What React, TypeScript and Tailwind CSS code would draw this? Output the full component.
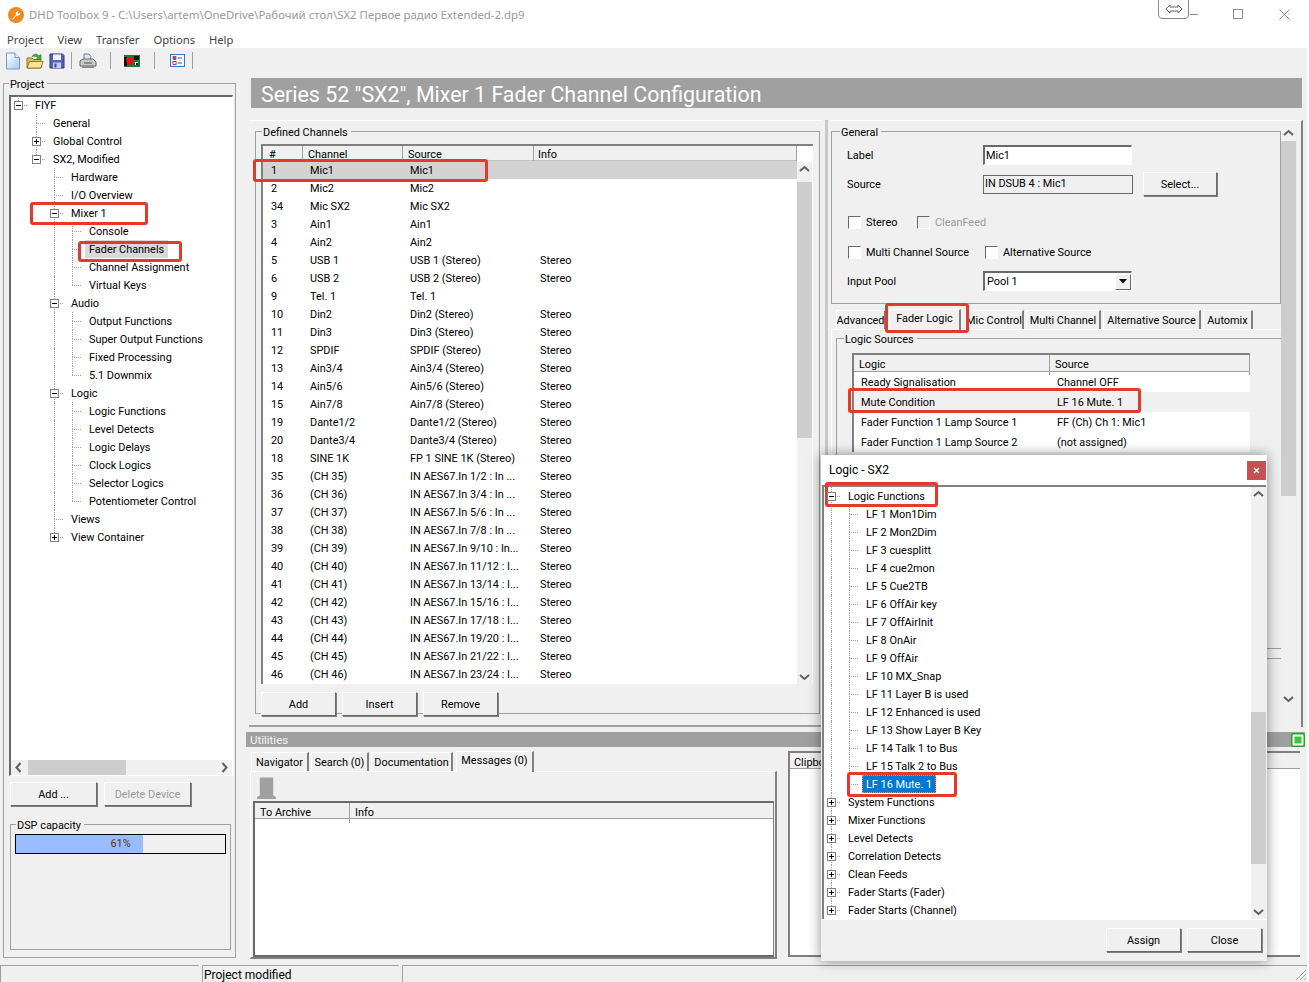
import React from "react";

type Node = [number, string, "leaf" | "plus" | "minus", boolean?];

const projectTree: Node[] = [
  [0, "FIYF", "minus"],
  [1, "General", "leaf"],
  [1, "Global Control", "plus"],
  [1, "SX2, Modified", "minus"],
  [2, "Hardware", "leaf"],
  [2, "I/O Overview", "leaf"],
  [2, "Mixer 1", "minus"],
  [3, "Console", "leaf"],
  [3, "Fader Channels", "leaf", true],
  [3, "Channel Assignment", "leaf"],
  [3, "Virtual Keys", "leaf"],
  [2, "Audio", "minus"],
  [3, "Output Functions", "leaf"],
  [3, "Super Output Functions", "leaf"],
  [3, "Fixed Processing", "leaf"],
  [3, "5.1 Downmix", "leaf"],
  [2, "Logic", "minus"],
  [3, "Logic Functions", "leaf"],
  [3, "Level Detects", "leaf"],
  [3, "Logic Delays", "leaf"],
  [3, "Clock Logics", "leaf"],
  [3, "Selector Logics", "leaf"],
  [3, "Potentiometer Control", "leaf"],
  [2, "Views", "leaf"],
  [2, "View Container", "plus"],
];

const logicTree: Node[] = [
  [0, "Logic Functions", "minus"],
  [1, "LF 1 Mon1Dim", "leaf"],
  [1, "LF 2 Mon2Dim", "leaf"],
  [1, "LF 3 cuesplitt", "leaf"],
  [1, "LF 4 cue2mon", "leaf"],
  [1, "LF 5 Cue2TB", "leaf"],
  [1, "LF 6 OffAir key", "leaf"],
  [1, "LF 7 OffAirInit", "leaf"],
  [1, "LF 8 OnAir", "leaf"],
  [1, "LF 9 OffAir", "leaf"],
  [1, "LF 10 MX_Snap", "leaf"],
  [1, "LF 11 Layer B is used", "leaf"],
  [1, "LF 12 Enhanced is used", "leaf"],
  [1, "LF 13 Show Layer B Key", "leaf"],
  [1, "LF 14 Talk 1 to Bus", "leaf"],
  [1, "LF 15 Talk 2 to Bus", "leaf"],
  [1, "LF 16 Mute. 1", "leaf", true],
  [0, "System Functions", "plus"],
  [0, "Mixer Functions", "plus"],
  [0, "Level Detects", "plus"],
  [0, "Correlation Detects", "plus"],
  [0, "Clean Feeds", "plus"],
  [0, "Fader Starts (Fader)", "plus"],
  [0, "Fader Starts (Channel)", "plus"],
];

const channels: [string, string, string, string][] = [
  ["1", "Mic1", "Mic1", ""],
  ["2", "Mic2", "Mic2", ""],
  ["34", "Mic SX2", "Mic SX2", ""],
  ["3", "Ain1", "Ain1", ""],
  ["4", "Ain2", "Ain2", ""],
  ["5", "USB 1", "USB 1 (Stereo)", "Stereo"],
  ["6", "USB 2", "USB 2 (Stereo)", "Stereo"],
  ["9", "Tel. 1", "Tel. 1", ""],
  ["10", "Din2", "Din2 (Stereo)", "Stereo"],
  ["11", "Din3", "Din3 (Stereo)", "Stereo"],
  ["12", "SPDIF", "SPDIF (Stereo)", "Stereo"],
  ["13", "Ain3/4", "Ain3/4 (Stereo)", "Stereo"],
  ["14", "Ain5/6", "Ain5/6 (Stereo)", "Stereo"],
  ["15", "Ain7/8", "Ain7/8 (Stereo)", "Stereo"],
  ["19", "Dante1/2", "Dante1/2 (Stereo)", "Stereo"],
  ["20", "Dante3/4", "Dante3/4 (Stereo)", "Stereo"],
  ["18", "SINE 1K", "FP 1 SINE 1K (Stereo)", "Stereo"],
  ["35", "(CH 35)", "IN AES67.In 1/2 : In ...", "Stereo"],
  ["36", "(CH 36)", "IN AES67.In 3/4 : In ...", "Stereo"],
  ["37", "(CH 37)", "IN AES67.In 5/6 : In ...", "Stereo"],
  ["38", "(CH 38)", "IN AES67.In 7/8 : In ...", "Stereo"],
  ["39", "(CH 39)", "IN AES67.In 9/10 : In...", "Stereo"],
  ["40", "(CH 40)", "IN AES67.In 11/12 : I...", "Stereo"],
  ["41", "(CH 41)", "IN AES67.In 13/14 : I...", "Stereo"],
  ["42", "(CH 42)", "IN AES67.In 15/16 : I...", "Stereo"],
  ["43", "(CH 43)", "IN AES67.In 17/18 : I...", "Stereo"],
  ["44", "(CH 44)", "IN AES67.In 19/20 : I...", "Stereo"],
  ["45", "(CH 45)", "IN AES67.In 21/22 : I...", "Stereo"],
  ["46", "(CH 46)", "IN AES67.In 23/24 : I...", "Stereo"],
];

const logicRows = [
  ["Ready Signalisation", "Channel OFF"],
  ["Mute Condition", "LF 16 Mute. 1"],
  ["Fader Function 1 Lamp Source 1", "FF (Ch) Ch 1: Mic1"],
  ["Fader Function 1 Lamp Source 2", "(not assigned)"],
];

// does another sibling follow at this level, before the tree climbs out of it
function continues(tree: Node[], index: number, level: number) {
  for (let i = index + 1; i < tree.length; i++) {
    if (tree[i][0] === level) return true;
    if (tree[i][0] < level) return false;
  }
  return false;
}

function ExpandBox({ open }: { open: boolean }) {
  return (
    <span className="relative z-10 flex h-[9px] w-[9px] items-center justify-center border border-[#808080] bg-white">
      <svg width="7" height="7" viewBox="0 0 7 7">
        <path d={open ? "M1 3.5H6" : "M1 3.5H6M3.5 1V6"} stroke="#000" strokeWidth="1" />
      </svg>
    </span>
  );
}

function Tree({ nodes, activeClass }: { nodes: Node[]; activeClass: string }) {
  return (
    <div className="flex flex-col">
      {nodes.map((n, i) => {
        const [level, label, kind, active] = n;
        const guides = Array.from({ length: level }, (_, g) => continues(nodes, i, g));
        return (
          <div key={label + i} className="flex h-[18px] items-center">
            {guides.map((on, g) => (
              <span key={g} className="flex h-full w-[18px] shrink-0">
                {on && <span className="ml-[9px] h-full border-l border-dotted border-[#a0a0a0]" />}
              </span>
            ))}
            <span className="relative flex h-full w-[18px] shrink-0 items-center justify-center">
              <span className="absolute top-0 left-[9px] h-1/2 border-l border-dotted border-[#a0a0a0]" />
              {continues(nodes, i, level) && (
                <span className="absolute top-1/2 bottom-0 left-[9px] border-l border-dotted border-[#a0a0a0]" />
              )}
              <span className="absolute top-1/2 left-[9px] w-[9px] border-t border-dotted border-[#a0a0a0]" />
              {kind !== "leaf" && <ExpandBox open={kind === "minus"} />}
            </span>
            <span
              className={`ml-[4px] h-[18px] px-[4px] pt-[1px] leading-[18px] whitespace-nowrap ${active ? activeClass : ""}`}
            >
              {label}
            </span>
          </div>
        );
      })}
    </div>
  );
}

function Chevron({ dir }: { dir: "up" | "down" | "left" | "right" }) {
  const d = {
    up: "M3 9L7.5 5L12 9",
    down: "M3 6L7.5 10L12 6",
    left: "M9.5 3L5.5 7.5L9.5 12",
    right: "M5.5 3L9.5 7.5L5.5 12",
  }[dir];
  return (
    <svg width="15" height="15" viewBox="0 0 15 15" className="shrink-0">
      <path d={d} fill="none" stroke="#606060" strokeWidth="2" />
    </svg>
  );
}

function VScroll({ className, before, thumb }: { className: string; before: string; thumb: string }) {
  return (
    <div className={`flex w-[15px] shrink-0 flex-col bg-[#f0f0f0] ${className}`}>
      <Chevron dir="up" />
      <div className={`shrink-0 ${before}`} />
      <div className={`shrink-0 bg-[#cdcdcd] ${thumb}`} />
      <div className="flex-1" />
      <Chevron dir="down" />
    </div>
  );
}

function Button({ children, className = "" }: { children: React.ReactNode; className?: string }) {
  return (
    <div
      className={`flex h-[24px] shrink-0 items-center justify-center border border-t-white border-r-[#696969] border-b-[#696969] border-l-white bg-[#f0f0f0] pt-[2px] shadow-[1px_1px_0_#808080] ${className}`}
    >
      {children}
    </div>
  );
}

function Group({
  title,
  className = "",
  inner = "",
  legend = "ml-[5px]",
  children,
}: {
  title: string;
  className?: string;
  inner?: string;
  legend?: string;
  children?: React.ReactNode;
}) {
  return (
    <fieldset className={`border border-[#a0a0a0] ${className}`}>
      <legend className={`h-[14px] pr-[3px] pl-[1px] leading-[17px] ${legend}`}>{title}</legend>
      <div className={`flex flex-col ${inner}`}>{children}</div>
    </fieldset>
  );
}

function Check({ label, disabled = false }: { label: string; disabled?: boolean }) {
  return (
    <div className={`flex items-center gap-[5px] ${disabled ? "text-[#9a9a9a]" : ""}`}>
      <span
        className={`ml-px h-[13px] w-[13px] border border-t-[#696969] border-r-white border-b-white border-l-[#696969] ${
          disabled ? "bg-[#f0f0f0]" : "bg-white"
        }`}
      />
      <span className="pt-[2px]">{label}</span>
    </div>
  );
}

function Tab({ label, className, active = false }: { label: string; className: string; active?: boolean }) {
  return (
    <div
      className={`flex shrink-0 items-center justify-center border-t border-r-2 border-l border-t-white border-r-[#808080] border-l-white bg-[#f0f0f0] whitespace-nowrap ${
        active ? "z-10 -mb-px h-[21px] pb-[1px]" : "h-[19px] pt-[2px]"
      } ${className}`}
    >
      {label}
    </div>
  );
}

function NewIcon() {
  return (
    <svg width="16" height="18" viewBox="0 0 16 18">
      <defs>
        <linearGradient id="paper" x1="0" y1="0" x2="1" y2="1">
          <stop offset="0" stopColor="#ffffff" />
          <stop offset="1" stopColor="#a9c8ee" />
        </linearGradient>
      </defs>
      <path d="M1.5 1H10L14.5 5.5V17H1.5Z" fill="url(#paper)" stroke="#7d97bd" />
      <path d="M10 1V5.5H14.5" fill="#eef4fc" stroke="#7d97bd" />
    </svg>
  );
}

function OpenIcon() {
  return (
    <svg width="18" height="18" viewBox="0 0 18 18">
      <path d="M1 6H6L7 7.5H15V16H1Z" fill="#e3bf5c" stroke="#96762a" />
      <path d="M1 16L3.5 9.5H17L15 16Z" fill="#fbe593" stroke="#96762a" />
      <path d="M6 4.5C8 1.5 11 1.5 13 4L15 2.5V7.5H10L11.7 5.7C10 4 8 4 6 4.5Z" fill="#3fae3a" stroke="#23771f" strokeWidth=".6" />
    </svg>
  );
}

function SaveIcon() {
  return (
    <svg width="16" height="16" viewBox="0 0 16 16">
      <path d="M1 1H13.5L15 2.5V15H1Z" fill="#5562b8" stroke="#2c3484" />
      <rect x="4" y="1.5" width="8" height="5.5" fill="#f4f4fb" />
      <rect x="4" y="9.5" width="8" height="5.5" fill="#c8cde8" />
      <rect x="5.5" y="10.5" width="2" height="4" fill="#3c4698" />
    </svg>
  );
}

function PrintIcon() {
  return (
    <svg width="18" height="16" viewBox="0 0 18 16">
      <path d="M5 1H10L12 3.5L11 8H5Z" fill="#dfe6ef" stroke="#6d7d92" />
      <path d="M1 8L4 6H14L17 9V13H1Z" fill="#c9c9c9" stroke="#6a6a6a" />
      <path d="M3 13H15V15H3Z" fill="#8c8c8c" />
      <path d="M5 10H13" stroke="#4f4f4f" />
    </svg>
  );
}

function BoardIcon() {
  return (
    <svg width="16" height="12" viewBox="0 0 16 12">
      <rect width="16" height="12" fill="#1b7a3a" />
      <rect x="0" y="2" width="3" height="9" fill="#101010" />
      <path d="M2 3L7 2L10 5L8 10L3 9Z" fill="#f20d0d" />
      <rect x="10" y="1" width="5" height="4" fill="#101010" />
      <rect x="11" y="7" width="3" height="3" fill="#e8e8e8" />
      <rect x="12" y="8" width="2" height="2" fill="#101010" />
    </svg>
  );
}

function CheckListIcon() {
  return (
    <svg width="15" height="13" viewBox="0 0 15 13">
      <rect x=".5" y=".5" width="14" height="12" fill="#f2f6fc" stroke="#2a78d0" />
      <rect x="3" y="2.5" width="3" height="3" fill="#d9433a" stroke="#7a2b26" strokeWidth=".5" />
      <rect x="3" y="7.5" width="3" height="3" fill="#fff" stroke="#7a2b26" strokeWidth=".8" />
      <path d="M7.5 4H12M7.5 9H12" stroke="#5b5b5b" strokeWidth="1.2" />
    </svg>
  );
}

const marks = [
  "left-[253px] top-[159px] w-[235px] h-[23px]",
  "left-[30px] top-[202px] w-[118px] h-[23px]",
  "left-[78px] top-[241px] w-[104px] h-[21px]",
  "left-[885px] top-[303px] w-[84px] h-[30px]",
  "left-[848px] top-[388px] w-[293px] h-[25px]",
  "left-[825px] top-[482px] w-[113px] h-[25px]",
  "left-[847px] top-[772px] w-[110px] h-[25px]",
];

export default function App() {
  return (
    <div className="relative flex h-[982px] w-[1309px] flex-col overflow-hidden bg-[#f0f0f0] [font-family:Roboto,sans-serif] text-[10.9px] text-black">
      {/* Title bar and menu */}
      <div className="flex h-[30px] shrink-0 items-center bg-white pl-[8px] [font-family:'Noto_Sans',sans-serif] text-[11.4px] text-[#999999]">
        <svg width="16" height="16" viewBox="0 0 16 16" className="mr-[5px]">
          <circle cx="8" cy="8" r="8" fill="#ee8a1e" />
          <path d="M4 12L8 8C7.2 6 8.6 3.8 11 4L9.6 5.8L10.6 6.9L12.4 5.4C12.6 7.8 10.4 9 8.6 8.6L5 12.4Z" fill="#fff" />
        </svg>
        DHD Toolbox 9 - C:\Users\artem\OneDrive\Рабочий стол\SX2 Первое радио Extended-2.dp9
      </div>
      <div className="flex h-[18px] shrink-0 items-center gap-[14px] bg-white pt-[2px] pl-[7px] [font-family:'Noto_Sans',sans-serif] text-[11.2px] text-[#444444]">
        <span>Project</span>
        <span>View</span>
        <span>Transfer</span>
        <span>Options</span>
        <span>Help</span>
      </div>

      {/* Toolbar */}
      <div className="flex h-[25px] shrink-0 items-center pl-[4px]">
        <div className="flex w-[18px] justify-center"><NewIcon /></div>
        <div className="ml-[4px] flex w-[18px] justify-center"><OpenIcon /></div>
        <div className="ml-[4px] flex w-[18px] justify-center"><SaveIcon /></div>
        <div className="ml-[5px] h-[17px] border-l border-[#a0a0a0]" />
        <div className="ml-[7px] flex w-[18px] justify-center"><PrintIcon /></div>
        <div className="ml-[13px] h-[17px] border-l border-[#a0a0a0]" />
        <div className="ml-[13px] flex w-[16px] justify-center"><BoardIcon /></div>
        <div className="ml-[14px] h-[17px] border-l border-[#a0a0a0]" />
        <div className="ml-[15px] flex w-[15px] justify-center"><CheckListIcon /></div>
        <div className="ml-[7px] h-[17px] border-l border-[#a0a0a0]" />
      </div>

      {/* Main area */}
      <div className="flex h-[892px] shrink-0">
        {/* Project column */}
        <div className="flex w-[246px] shrink-0 flex-col pt-[3px] pl-[3px]">
          <Group title="Project" className="h-[882px] w-[233px]" inner="pl-[5px]">
            <div className="mt-[5px] flex h-[681px] w-[224px] shrink-0 flex-col border-t-2 border-l-2 border-t-[#696969] border-r border-b border-l-[#696969] border-r-white border-b-white bg-white">
              <div className="-mt-px -ml-[2px] flex-1">
                <Tree nodes={projectTree} activeClass="bg-[#d9d9d9]" />
              </div>
              <div className="flex h-[15px] shrink-0 bg-[#f0f0f0]">
                <Chevron dir="left" />
                <div className="ml-[2px] h-full w-[98px] bg-[#cdcdcd]" />
                <div className="flex-1" />
                <Chevron dir="right" />
              </div>
            </div>
            <div className="mt-[6px] flex gap-[7px] pl-px">
              <Button className="w-[87px]">Add ...</Button>
              <Button className="w-[87px] text-[#9a9a9a]">Delete Device</Button>
            </div>
            <Group title="DSP capacity" className="mt-[11px] ml-px h-[133px] w-[220px]" inner="px-[4px]">
              <div className="relative mt-[3px] h-[20px] w-[211px] border border-black">
                <div className="h-full w-[61%] bg-[#99bbff]" />
                <span className="absolute inset-0 flex items-center justify-center pt-[1px] text-[#553311]">61%</span>
              </div>
            </Group>
          </Group>
        </div>

        {/* Working area */}
        <div className="flex w-[1060px] shrink-0 flex-col">
          <div className="mt-[5px] ml-[5px] flex h-[30px] w-[1051px] shrink-0 items-center bg-[#a0a0a0] pt-[4px] pl-[10px] text-[21.4px] text-white">
            Series 52 "SX2", Mixer 1 Fader Channel Configuration
          </div>

          <div className="mt-[12px] flex h-[607px] shrink-0">
            {/* Defined channels */}
            <div className="ml-[3px] flex w-[573px] shrink-0 flex-col border-t border-b-2 border-t-white border-b-[#a0a0a0] pt-[3px] pl-[6px]">
              <Group title="Defined Channels" className="h-[590px] w-[565px]" legend="ml-[6px]" inner="pl-[5px]">
                <div className="mt-[6px] flex h-[540px] w-[552px] shrink-0 border-t-2 border-l-2 border-t-[#808080] border-l-[#808080] bg-white">
                  <div className="flex w-[534px] shrink-0 flex-col">
                    <div className="grid h-[15px] shrink-0 grid-cols-[39px_100px_131px_264px] border-b border-[#c0c0c0] bg-[#f0f0f0] leading-[18px]">
                      <span className="pl-[6px]">#</span>
                      <span className="border-l border-[#a0a0a0] pl-[5px]">Channel</span>
                      <span className="border-l border-[#a0a0a0] pl-[5px]">Source</span>
                      <span className="border-r border-l border-[#a0a0a0] pl-[4px]">Info</span>
                    </div>
                    {channels.map((c, i) => (
                      <div
                        key={c[0]}
                        className={`grid h-[18px] shrink-0 grid-cols-[39px_100px_131px_264px] leading-[20px] whitespace-nowrap ${
                          i === 0 ? "bg-[#d3d3d3]" : ""
                        }`}
                      >
                        <span className="pl-[8px]">{c[0]}</span>
                        <span className="pl-[8px]">{c[1]}</span>
                        <span className="pl-[8px]">{c[2]}</span>
                        <span className="pl-[7px]">{c[3]}</span>
                      </div>
                    ))}
                  </div>
                  <VScroll className="mt-[16px]" before="h-[5px]" thumb="h-[256px]" />
                </div>
                <div className="mt-[8px] flex gap-[6px]">
                  <Button className="w-[75px]">Add</Button>
                  <Button className="w-[75px]">Insert</Button>
                  <Button className="w-[75px]">Remove</Button>
                </div>
              </Group>
            </div>

            {/* Splitter */}
            <div className="ml-[3px] h-full w-[3px] shrink-0 bg-[#c8c8c8]" />

            {/* Channel properties */}
            <div className="ml-[3px] flex h-full w-[472px] shrink-0 border-t border-r-2 border-t-white border-r-[#808080]">
              <div className="flex w-[450px] shrink-0 flex-col overflow-hidden">
                <Group title="General" className="mt-[3px] h-[180px] w-[450px] shrink-0" legend="ml-[8px]" inner="pl-[15px]">
                  <div className="mt-[6px] flex h-[22px] items-center">
                    <span className="w-[136px] pt-[2px]">Label</span>
                    <div className="flex h-[20px] w-[149px] items-center border-t-2 border-r border-b border-l-2 border-t-[#696969] border-r-white border-b-white border-l-[#696969] bg-white pt-[1px] pl-px">Mic1</div>
                  </div>
                  <div className="mt-[7px] flex h-[22px] items-center">
                    <span className="w-[136px] pt-[2px]">Source</span>
                    <div className="flex h-[19px] w-[150px] items-center border border-[#696969] pt-[1px] pl-px">IN DSUB 4 : Mic1</div>
                    <Button className="ml-[10px] w-[74px]">Select...</Button>
                  </div>
                  <div className="mt-[20px] flex h-[14px] items-center">
                    <div className="w-[69px]"><Check label="Stereo" /></div>
                    <Check label="CleanFeed" disabled />
                  </div>
                  <div className="mt-[16px] flex h-[14px] items-center">
                    <div className="w-[137px]"><Check label="Multi Channel Source" /></div>
                    <Check label="Alternative Source" />
                  </div>
                  <div className="mt-[12px] flex h-[20px] items-center">
                    <span className="w-[136px] pt-[2px]">Input Pool</span>
                    <div className="flex h-[20px] w-[149px] items-center justify-between border-t-2 border-r border-b border-l-2 border-t-[#696969] border-r-white border-b-white border-l-[#696969] bg-white pl-[2px]">
                      <span className="pt-[2px]">Pool 1</span>
                      <span className="flex h-[16px] w-[16px] items-center justify-center border border-t-white border-r-[#696969] border-b-[#696969] border-l-white bg-[#f0f0f0]">
                        <svg width="8" height="5" viewBox="0 0 8 5"><path d="M0 0H8L4 4.5Z" fill="#000" /></svg>
                      </span>
                    </div>
                  </div>
                </Group>

                <div className="mt-[6px] flex h-[19px] shrink-0 items-end gap-[2px] pl-[5px]">
                  <Tab label="Advanced" className="w-[50px] overflow-hidden" />
                  <Tab label="Fader Logic" className="ml-px w-[72px]" active />
                  <Tab label="Mic Control" className="ml-[2px] w-[59px]" />
                  <Tab label="Multi Channel" className="w-[75px]" />
                  <Tab label="Alternative Source" className="w-[98px]" />
                  <Tab label="Automix" className="w-[50px]" />
                </div>

                <div className="flex h-[374px] w-[450px] shrink-0 flex-col border-t border-l border-t-white border-l-white pl-[4px]">
                  <Group title="Logic Sources" className="mt-[1px] h-[318px] w-[460px] shrink-0" legend="ml-[7px]" inner="pl-[15px]">
                    <div className="mt-[8px] flex w-[398px] flex-col border-t-2 border-l-2 border-t-[#808080] border-l-[#808080] bg-white">
                      <div className="grid h-[17px] shrink-0 grid-cols-[195px_201px] border-b border-[#a0a0a0] bg-[#f0f0f0] leading-[20px]">
                        <span className="pl-[5px]">Logic</span>
                        <span className="border-r border-l border-[#a0a0a0] pl-[5px]">Source</span>
                      </div>
                      {logicRows.map((r, i) => (
                        <div key={r[0]} className={`grid h-[20px] grid-cols-[196px_201px] leading-[22px] ${i === 1 ? "bg-[#f0f0f0]" : ""}`}>
                          <span className="pl-[7px]">{r[0]}</span>
                          <span className="pl-[7px]">{r[1]}</span>
                        </div>
                      ))}
                    </div>
                  </Group>
                  <div className="mt-[9px] w-[460px] border-t border-[#a0a0a0]" />
                </div>
              </div>
              <VScroll className="mt-[5px] h-[580px]" before="h-0" thumb="h-[355px]" />
            </div>
          </div>

          {/* Utilities */}
          <div className="mt-[5px] flex h-[15px] w-[1059px] shrink-0 items-center justify-between bg-[#a0a0a0] pl-[4px] text-[#f4f4f4]">
            <span className="pt-[3px] text-[11.5px]">Utilities</span>
            <svg width="14" height="14" viewBox="0 0 14 14">
              <rect x=".75" y=".75" width="12.5" height="12.5" rx="1.5" fill="#fff" stroke="#1fa81f" strokeWidth="1.5" />
              <rect x="3.5" y="3.5" width="7" height="7" fill="#37c937" />
            </svg>
          </div>
          <div className="flex h-[218px] shrink-0">
            <div className="ml-[4px] flex w-[527px] shrink-0 flex-col pt-[4px]">
              <div className="flex h-[20px] shrink-0 items-end gap-[2px] pl-px">
                <Tab label="Navigator" className="w-[58px]" />
                <Tab label="Search (0)" className="w-[58px]" />
                <Tab label="Documentation" className="w-[82px]" />
                <Tab label="Messages (0)" className="ml-px w-[78px]" active />
              </div>
              <div className="flex h-[188px] flex-col border-t border-r-2 border-b-2 border-l border-t-white border-r-[#808080] border-b-[#808080] border-l-white pl-[2px]">
                <svg width="23" height="23" viewBox="0 0 24 24" className="mt-[5px] ml-[2px] shrink-0">
                  <path d="M5 1.5Q5 0.5 6 0.5H18Q19 0.5 19 1.5V19L22 21V22.5Q22 23 21 23H3Q2 23 2 22.5V21L5 19Z" fill="#a0a0a0" />
                </svg>
                <div className="mt-px flex h-[156px] w-[521px] flex-col border-2 border-r border-[#696969] border-r-[#808080] bg-white">
                  <div className="grid h-[16px] grid-cols-[94px_1fr] border-b border-[#a0a0a0] bg-[#f0f0f0] leading-[20px]">
                    <span className="pl-[5px]">To Archive</span>
                    <span className="border-l border-[#a0a0a0] pl-[5px]">Info</span>
                  </div>
                </div>
              </div>
            </div>
            <div className="mt-[4px] ml-[11px] flex h-[206px] w-[512px] shrink-0 flex-col border-t-2 border-b-2 border-l-2 border-[#808080] bg-white">
              <div className="h-[16px] border-b border-[#a0a0a0] bg-[#f0f0f0] pl-[4px] leading-[20px]">Clipboard</div>
            </div>
          </div>
        </div>
      </div>

      {/* Status bar */}
      <div className="flex h-[17px] shrink-0 gap-[3px] leading-[18px]">
        <div className="w-[199px] border-t border-l border-[#a0a0a0]" />
        <div className="w-[197px] border-t border-l border-[#a0a0a0] pl-[1px] text-[12px]">Project modified</div>
        <div className="flex-1 border-t border-l border-[#a0a0a0]" />
      </div>
      <svg width="12" height="12" viewBox="0 0 12 12" className="absolute right-[2px] bottom-[1px]">
        <path d="M1 11L11 1M5 11L11 5M9 11L11 9" stroke="#a8a8a8" />
      </svg>
      <div className="absolute top-0 right-0 h-full w-[2px] bg-white" />

      {/* Caption buttons */}
      <div className="absolute top-[-1px] left-[1158px] flex h-[20px] w-[31px] items-center justify-center rounded-b-[4px] border border-[#888888] bg-white">
        <svg width="18" height="10" viewBox="0 0 18 10">
          <path d="M1 5L5 1V3H13V1L17 5L13 9V7H5V9Z" fill="#fff" stroke="#666" />
        </svg>
      </div>
      <div className="absolute top-[14px] left-[1190px] w-[8px] border-t border-[#909090]" />
      <div className="absolute top-[9px] left-[1233px] h-[10px] w-[10px] border border-[#909090]" />
      <svg width="11" height="11" viewBox="0 0 11 11" className="absolute top-[9px] left-[1279px]">
        <path d="M.5 .5L10.5 10.5M10.5 .5L.5 10.5" stroke="#909090" />
      </svg>

      {/* Logic picker dialog */}
      <div className="absolute top-[455px] left-[821px] flex h-[506px] w-[446px] flex-col bg-[#f0f0f0] shadow-[0_0_12px_rgba(0,0,0,0.45)]">
        <div className="flex h-[30px] shrink-0 items-center justify-between bg-white pr-px pl-[8px] text-[12px]">
          Logic - SX2
          <span className="mt-[1px] flex h-[19px] w-[19px] items-center justify-center bg-[#c75050]">
            <svg width="7" height="7" viewBox="0 0 7 7"><path d="M1 1L6 6M6 1L1 6" stroke="#fff" strokeWidth="1.4" /></svg>
          </span>
        </div>
        <div className="ml-px flex h-[434px] w-[444px] shrink-0 border-t-2 border-l-2 border-t-[#808080] border-l-[#808080] bg-white">
          <div className="-ml-[2px] min-w-0 flex-1 overflow-hidden">
            <Tree nodes={logicTree} activeClass="bg-[#0078d7] text-white outline outline-dotted outline-[#d0a060] -outline-offset-1" />
          </div>
          <VScroll className="h-full" before="h-[210px]" thumb="h-[152px]" />
        </div>
        <div className="flex flex-1 items-start justify-end gap-[6px] border-t border-white pt-[8px] pr-[5px]">
          <Button className="w-[75px]">Assign</Button>
          <Button className="w-[75px]">Close</Button>
        </div>
      </div>

      {/* Red callouts drawn on top of the screenshot */}
      {marks.map((m) => (
        <div key={m} className={`absolute rounded-[3px] border-[3px] border-[#e5392d] ${m}`} />
      ))}
    </div>
  );
}
